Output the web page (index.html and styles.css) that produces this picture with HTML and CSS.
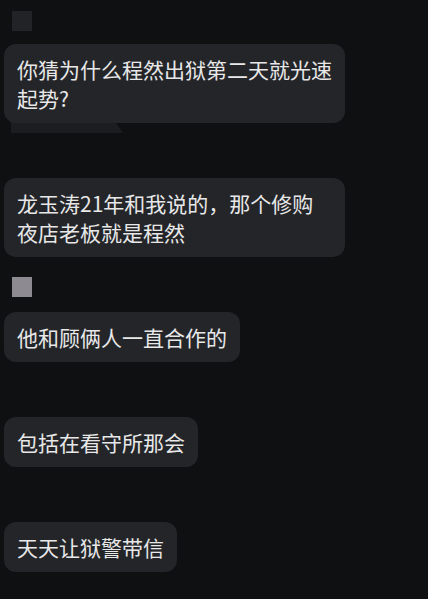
FILE: index.html
```html
<!DOCTYPE html>
<html lang="zh-CN">
<head>
    <meta charset="UTF-8">
    <meta name="viewport" content="width=device-width, initial-scale=1.0">
    <title>聊天记录</title>
    <link rel="stylesheet" href="styles.css">
</head>
<body>
<div class="chat">
    <div class="avatar dark"></div>
    <div class="bubble first">你猜为什么程然出狱第二天就光速起势?</div>
    <div class="bubble gap">龙玉涛21年和我说的，那个修购夜店老板就是程然</div>
    <div class="avatar light"></div>
    <div class="bubble after-avatar">他和顾俩人一直合作的</div>
    <div class="bubble gap">包括在看守所那会</div>
    <div class="bubble gap">天天让狱警带信</div>
</div>
</body>
</html>
```

FILE: styles.css
```css
body {
    margin: 0;
    padding: 0;
    background-color: #0f1012;
    font-family: "Noto Sans CJK SC", "Noto Sans", sans-serif;
}

.chat {
    display: flex;
    flex-direction: column;
    align-items: flex-start;
    padding: 11px 0 20px 4px;
}

.avatar {
    width: 20px;
    height: 20px;
    margin-left: 8px;
}

.avatar.dark {
    background-color: #222327;
}

.avatar.light {
    margin-top: 20px;
    background-color: #8d8b91;
}

.bubble {
    position: relative;
    box-sizing: border-box;
    max-width: 341px;
    padding: 11px 13px 10px 13px;
    border-radius: 12px;
    background-color: #242528;
    color: #e8e8e8;
    font-size: 21px;
    line-height: 29px;
}

.bubble.first {
    margin-top: 13px;
}

/* the faint quote strip under the first message */
.bubble.first::after {
    content: "";
    position: absolute;
    left: 7px;
    top: 69px;
    width: 112px;
    height: 20px;
    background-color: #1c1d20;
    clip-path: polygon(0 0, 88% 0, 100% 100%, 0 100%);
    z-index: -1;
}

.bubble.gap {
    margin-top: 55px;
}

.bubble.after-avatar {
    margin-top: 15px;
}
```
